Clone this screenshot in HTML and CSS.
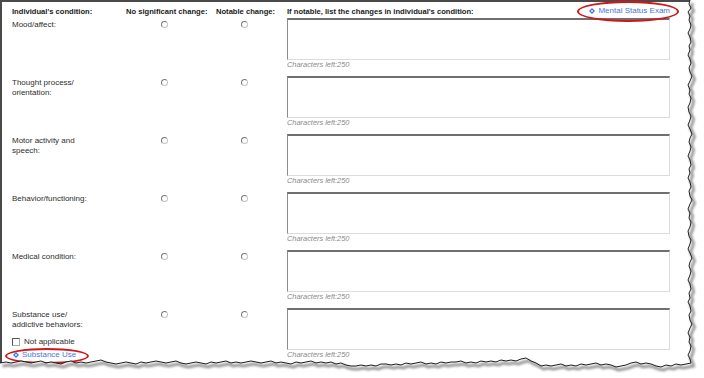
FILE: index.html
```html
<!DOCTYPE html>
<html lang="en">
<head>
<meta charset="utf-8">
<title>Individual's condition</title>
<link rel="stylesheet" href="styles.css">
</head>
<body>
<div class="sheet">
  <div class="grid">
    <div class="hd">Individual's condition:</div>
    <div class="hd">No significant change:</div>
    <div class="hd">Notable change:</div>
    <div class="hd hd-notes">
      <span>If notable, list the changes in individual's condition:</span>
      <a class="link mse" href="#"><svg class="ico" viewBox="0 0 6 6" width="6" height="6"><polygon points="3,0 6,3 3,6 0,3" fill="#4677dc"/><circle cx="3" cy="3" r="0.9" fill="#fff"/></svg>Mental Status Exam</a>
    </div>

    <div class="label">Mood/affect:</div>
    <div class="opt"><span class="radio"></span></div>
    <div class="opt"><span class="radio"></span></div>
    <div class="notes"><textarea class="box"></textarea><div class="count">Characters left:250</div></div>

    <div class="label">Thought process/<br>orientation:</div>
    <div class="opt"><span class="radio"></span></div>
    <div class="opt"><span class="radio"></span></div>
    <div class="notes"><textarea class="box"></textarea><div class="count">Characters left:250</div></div>

    <div class="label">Motor activity and<br>speech:</div>
    <div class="opt"><span class="radio"></span></div>
    <div class="opt"><span class="radio"></span></div>
    <div class="notes"><textarea class="box"></textarea><div class="count">Characters left:250</div></div>

    <div class="label">Behavior/functioning:</div>
    <div class="opt"><span class="radio"></span></div>
    <div class="opt"><span class="radio"></span></div>
    <div class="notes"><textarea class="box"></textarea><div class="count">Characters left:250</div></div>

    <div class="label">Medical condition:</div>
    <div class="opt"><span class="radio"></span></div>
    <div class="opt"><span class="radio"></span></div>
    <div class="notes"><textarea class="box"></textarea><div class="count">Characters left:250</div></div>

    <div class="label label-last">
      <div>Substance use/<br>addictive behaviors:</div>
      <div class="na"><span class="check"></span><span>Not applicable</span></div>
      <a class="link su" href="#"><svg class="ico" viewBox="0 0 6 6" width="6" height="6"><polygon points="3,0 6,3 3,6 0,3" fill="#4677dc"/><circle cx="3" cy="3" r="0.9" fill="#fff"/></svg>Substance Use</a>
    </div>
    <div class="opt"><span class="radio"></span></div>
    <div class="opt"><span class="radio"></span></div>
    <div class="notes"><textarea class="box"></textarea><div class="count">Characters left:250</div></div>
  </div>
</div>

<svg class="tear" viewBox="0 0 704 378" width="704" height="378" aria-hidden="true">
  <defs>
    <filter id="blur" x="-5%" y="-5%" width="110%" height="110%"><feGaussianBlur stdDeviation="1.3"/></filter>
  </defs>
  <path class="tear-fill" d="M704,0 L690,0 L689,4 L691,8 L688,12 L690,16 L689,20 L691,25 L690,29 L688,33 L690,37 L691,42 L689,46 L690,50 L688,55 L690,59 L691,63 L689,68 L690,72 L692,76 L690,81 L688,85 L690,90 L689,94 L691,98 L690,103 L688,107 L689,112 L691,116 L690,120 L688,125 L690,129 L692,134 L690,138 L689,142 L691,147 L690,151 L688,156 L690,160 L691,165 L689,169 L690,173 L688,178 L690,182 L691,187 L689,191 L690,196 L692,200 L690,204 L688,209 L690,213 L689,218 L691,222 L690,227 L688,231 L689,236 L691,240 L690,244 L688,249 L690,253 L692,258 L690,262 L689,266 L691,271 L690,275 L688,280 L690,284 L691,289 L689,293 L690,298 L688,302 L690,306 L691,311 L689,315 L690,320 L692,324 L690,328 L688,333 L690,337 L689,342 L691,346 L690,351 L688,355 L690,359 L691,363 L686,364 L681,365 L676,364 L671,366 L666,365 L661,367 L656,366 L651,364 L646,363 L641,364 L636,362 L631,363 L626,365 L621,366 L616,367 L611,365 L606,364 L601,365 L596,363 L591,364 L586,365 L581,364 L576,366 L571,365 L566,366 L561,364 L556,365 L551,366 L546,365 L541,366 L536,363 L531,361 L526,358 L521,359 L516,361 L511,360 L506,361 L501,360 L496,362 L491,361 L486,362 L481,361 L476,363 L471,362 L466,363 L461,361 L456,362 L451,362 L446,363 L441,362 L436,364 L431,363 L426,364 L421,362 L416,363 L411,364 L406,363 L401,365 L396,364 L391,365 L386,364 L381,364 L376,366 L371,365 L366,366 L361,365 L356,366 L351,366 L346,365 L341,363 L336,364 L331,362 L326,363 L321,362 L316,363 L311,361 L306,362 L301,363 L296,362 L291,364 L286,363 L281,362 L276,363 L271,361 L266,362 L261,363 L256,362 L251,361 L246,362 L241,363 L236,362 L231,363 L226,361 L221,362 L216,363 L211,362 L206,364 L201,363 L196,362 L191,363 L186,364 L181,363 L176,361 L171,362 L166,363 L161,362 L156,361 L151,362 L146,363 L141,362 L136,364 L131,363 L126,362 L121,363 L116,364 L111,363 L106,362 L101,360 L96,361 L91,362 L86,363 L81,362 L76,363 L71,361 L66,362 L61,364 L56,363 L51,362 L46,363 L41,361 L36,362 L31,363 L26,362 L21,361 L16,362 L11,363 L6,362 L0,363 L0,378 L704,378 Z"/>
  <g id="edge">
  <path class="tear-shadow" filter="url(#blur)" transform="translate(2.5,3)" d="M690,0 L689,4 L691,8 L688,12 L690,16 L689,20 L691,25 L690,29 L688,33 L690,37 L691,42 L689,46 L690,50 L688,55 L690,59 L691,63 L689,68 L690,72 L692,76 L690,81 L688,85 L690,90 L689,94 L691,98 L690,103 L688,107 L689,112 L691,116 L690,120 L688,125 L690,129 L692,134 L690,138 L689,142 L691,147 L690,151 L688,156 L690,160 L691,165 L689,169 L690,173 L688,178 L690,182 L691,187 L689,191 L690,196 L692,200 L690,204 L688,209 L690,213 L689,218 L691,222 L690,227 L688,231 L689,236 L691,240 L690,244 L688,249 L690,253 L692,258 L690,262 L689,266 L691,271 L690,275 L688,280 L690,284 L691,289 L689,293 L690,298 L688,302 L690,306 L691,311 L689,315 L690,320 L692,324 L690,328 L688,333 L690,337 L689,342 L691,346 L690,351 L688,355 L690,359 L691,363 L686,364 L681,365 L676,364 L671,366 L666,365 L661,367 L656,366 L651,364 L646,363 L641,364 L636,362 L631,363 L626,365 L621,366 L616,367 L611,365 L606,364 L601,365 L596,363 L591,364 L586,365 L581,364 L576,366 L571,365 L566,366 L561,364 L556,365 L551,366 L546,365 L541,366 L536,363 L531,361 L526,358 L521,359 L516,361 L511,360 L506,361 L501,360 L496,362 L491,361 L486,362 L481,361 L476,363 L471,362 L466,363 L461,361 L456,362 L451,362 L446,363 L441,362 L436,364 L431,363 L426,364 L421,362 L416,363 L411,364 L406,363 L401,365 L396,364 L391,365 L386,364 L381,364 L376,366 L371,365 L366,366 L361,365 L356,366 L351,366 L346,365 L341,363 L336,364 L331,362 L326,363 L321,362 L316,363 L311,361 L306,362 L301,363 L296,362 L291,364 L286,363 L281,362 L276,363 L271,361 L266,362 L261,363 L256,362 L251,361 L246,362 L241,363 L236,362 L231,363 L226,361 L221,362 L216,363 L211,362 L206,364 L201,363 L196,362 L191,363 L186,364 L181,363 L176,361 L171,362 L166,363 L161,362 L156,361 L151,362 L146,363 L141,362 L136,364 L131,363 L126,362 L121,363 L116,364 L111,363 L106,362 L101,360 L96,361 L91,362 L86,363 L81,362 L76,363 L71,361 L66,362 L61,364 L56,363 L51,362 L46,363 L41,361 L36,362 L31,363 L26,362 L21,361 L16,362 L11,363 L6,362 L0,363"/>
  <path class="tear-line" d="M690,0 L689,4 L691,8 L688,12 L690,16 L689,20 L691,25 L690,29 L688,33 L690,37 L691,42 L689,46 L690,50 L688,55 L690,59 L691,63 L689,68 L690,72 L692,76 L690,81 L688,85 L690,90 L689,94 L691,98 L690,103 L688,107 L689,112 L691,116 L690,120 L688,125 L690,129 L692,134 L690,138 L689,142 L691,147 L690,151 L688,156 L690,160 L691,165 L689,169 L690,173 L688,178 L690,182 L691,187 L689,191 L690,196 L692,200 L690,204 L688,209 L690,213 L689,218 L691,222 L690,227 L688,231 L689,236 L691,240 L690,244 L688,249 L690,253 L692,258 L690,262 L689,266 L691,271 L690,275 L688,280 L690,284 L691,289 L689,293 L690,298 L688,302 L690,306 L691,311 L689,315 L690,320 L692,324 L690,328 L688,333 L690,337 L689,342 L691,346 L690,351 L688,355 L690,359 L691,363 L686,364 L681,365 L676,364 L671,366 L666,365 L661,367 L656,366 L651,364 L646,363 L641,364 L636,362 L631,363 L626,365 L621,366 L616,367 L611,365 L606,364 L601,365 L596,363 L591,364 L586,365 L581,364 L576,366 L571,365 L566,366 L561,364 L556,365 L551,366 L546,365 L541,366 L536,363 L531,361 L526,358 L521,359 L516,361 L511,360 L506,361 L501,360 L496,362 L491,361 L486,362 L481,361 L476,363 L471,362 L466,363 L461,361 L456,362 L451,362 L446,363 L441,362 L436,364 L431,363 L426,364 L421,362 L416,363 L411,364 L406,363 L401,365 L396,364 L391,365 L386,364 L381,364 L376,366 L371,365 L366,366 L361,365 L356,366 L351,366 L346,365 L341,363 L336,364 L331,362 L326,363 L321,362 L316,363 L311,361 L306,362 L301,363 L296,362 L291,364 L286,363 L281,362 L276,363 L271,361 L266,362 L261,363 L256,362 L251,361 L246,362 L241,363 L236,362 L231,363 L226,361 L221,362 L216,363 L211,362 L206,364 L201,363 L196,362 L191,363 L186,364 L181,363 L176,361 L171,362 L166,363 L161,362 L156,361 L151,362 L146,363 L141,362 L136,364 L131,363 L126,362 L121,363 L116,364 L111,363 L106,362 L101,360 L96,361 L91,362 L86,363 L81,362 L76,363 L71,361 L66,362 L61,364 L56,363 L51,362 L46,363 L41,361 L36,362 L31,363 L26,362 L21,361 L16,362 L11,363 L6,362 L0,363"/>
  </g>
</svg>
</body>
</html>
```

FILE: styles.css
```css
html, body {
  margin: 0;
  padding: 0;
  background: #fff;
}

body {
  width: 704px;
  height: 378px;
  overflow: hidden;
  position: relative;
  font-family: "Liberation Sans", Arial, sans-serif;
  color: #2e2e2e;
}

.sheet {
  box-sizing: border-box;
  width: 704px;
  height: 378px;
  border-top: 2px solid #4a4a4a;
  border-left: 2px solid #4a4a4a;
  padding: 4px 0 0 10px;
}

.grid {
  display: grid;
  grid-template-columns: 104px 80px 61px 383px;
  grid-template-rows: 12px repeat(6, 58px);
  column-gap: 10px;
}

.hd {
  font-weight: bold;
  font-size: 7.6px;
  line-height: 12px;
  color: #1a1a1a;
  white-space: nowrap;
}

.hd-notes {
  display: flex;
  justify-content: space-between;
  align-items: flex-start;
}

.label {
  font-size: 8px;
  line-height: 10px;
  color: #2e2e2e;
  padding-top: 2px;
  white-space: nowrap;
}

.label-last {
  display: flex;
  flex-direction: column;
  align-items: flex-start;
}

.opt {
  display: flex;
  justify-content: center;
  align-items: flex-start;
  padding-right: 4px;
  padding-top: 3px;
}

.radio {
  display: block;
  box-sizing: border-box;
  width: 7px;
  height: 7px;
  border-radius: 50%;
  border: 1px solid;
  border-color: #7a7a7a #c4c4c4 #c4c4c4 #7a7a7a;
  background: #fff;
}

.notes {
  display: flex;
  flex-direction: column;
}

.box {
  display: block;
  box-sizing: border-box;
  width: 100%;
  height: 42px;
  margin: 0;
  padding: 0;
  resize: none;
  background: #fff;
  border-top: 2px solid #707070;
  border-left: 1px solid #8c8c8c;
  border-right: 1px solid #dcdcdc;
  border-bottom: 1px solid #dcdcdc;
}

.count {
  font-style: italic;
  font-size: 7.4px;
  line-height: 10px;
  color: #8a8a8a;
}

.na {
  display: flex;
  align-items: center;
  gap: 4px;
  margin-top: 7px;
  line-height: 9px;
}

.check {
  display: block;
  box-sizing: border-box;
  width: 8px;
  height: 8px;
  border: 1px solid;
  border-color: #555 #a8a8a8 #a8a8a8 #555;
  background: #fff;
}

.link {
  position: relative;
  display: inline-flex;
  align-items: center;
  gap: 3px;
  color: #4677dc;
  font-size: 8px;
  font-weight: normal;
  line-height: 10px;
  text-decoration: none;
}

.ico {
  display: block;
  flex: none;
}

.link::after {
  content: "";
  position: absolute;
  border: 2px solid #d01818;
  border-radius: 50%;
}

.mse::after {
  left: -12px;
  right: -9px;
  top: -5px;
  bottom: -6px;
}

.su {
  margin-top: 4px;
  margin-left: 1px;
}

.su::after {
  left: -8px;
  right: -13px;
  top: -2px;
  bottom: -4px;
}

.tear {
  position: absolute;
  left: 0;
  top: 0;
  pointer-events: none;
}

.tear-fill {
  fill: #fff;
}

.tear-shadow {
  fill: none;
  stroke: #7a7a7a;
  stroke-width: 3;
  opacity: 0.75;
}

.tear-line {
  fill: none;
  stroke: #1e1e1e;
  stroke-width: 1;
}
```
